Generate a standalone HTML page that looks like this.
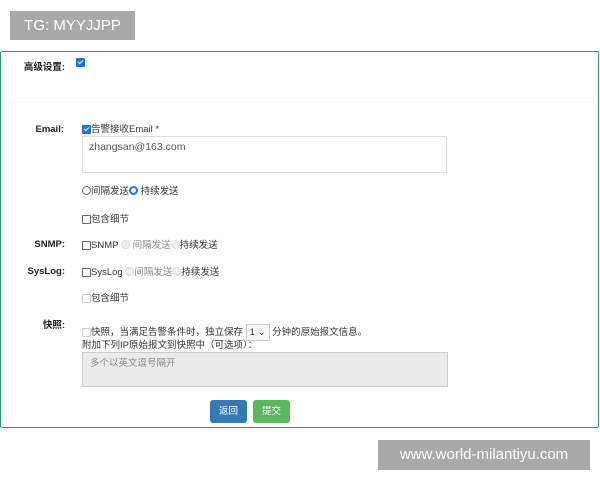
<!DOCTYPE html>
<html><head><meta charset="utf-8"><style>
body{margin:0;width:600px;height:480px;background:#fff;position:relative;overflow:hidden;font-family:"Liberation Sans","Noto Sans CJK SC",sans-serif;font-size:9.5px;color:#333}
.a{position:absolute;white-space:nowrap;line-height:11px}
.lb{font-weight:bold;color:#222;text-align:right;width:60px}
.cb{display:inline-block;width:9px;height:9px;border:1px solid #666;border-radius:1px;vertical-align:-2px;box-sizing:border-box;background:#fff}
.cb.on{background:#1a73e8;border-color:#1a73e8;position:relative}
.cb.on:after{content:"";position:absolute;left:2px;top:0px;width:2px;height:4px;border:solid #fff;border-width:0 1.3px 1.3px 0;transform:rotate(45deg)}
.cb.dis{border-color:#ccc}
.rd{display:inline-block;width:9px;height:9px;border:1px solid #666;border-radius:50%;box-sizing:border-box;vertical-align:-1px}
.rd.on{border:2.5px solid #1a73e8}
.rd.dis{border-color:#ddd;background:#eee}
.g{color:#888}
</style></head><body>
<div class="a" style="left:10px;top:11px;width:125px;height:29px;background:#a9a9a9;color:#fff;font-size:15px;line-height:29px;text-align:center">TG: MYYJJPP</div>
<div style="position:absolute;left:0;top:51px;width:597px;height:375px;border:1.5px solid #2a9d6a;border-radius:2px"></div>
<div style="position:absolute;left:10px;top:102px;width:586px;height:1px;background:#f2f2f2"></div>
<div class="a lb" style="left:5px;top:62px">高级设置:</div>
<div class="a" style="left:76px;top:57px"><span class="cb on"></span></div>
<div class="a lb" style="left:4px;top:124px">Email:</div>
<div class="a" style="left:82px;top:124px"><span class="cb on"></span>告警接收Email *</div>
<div style="position:absolute;left:82px;top:136px;width:365px;height:37px;border:1px solid #ddd;box-sizing:border-box"></div>
<div class="a" style="left:89px;top:142px;font-size:10.5px;color:#555">zhangsan@163.com</div>
<div class="a" style="left:82px;top:186px"><span class="rd"></span>间隔发送<span class="rd on"></span> 持续发送</div>
<div class="a" style="left:82px;top:214px"><span class="cb"></span>包含细节</div>
<div class="a lb" style="left:5px;top:239px">SNMP:</div>
<div class="a" style="left:82px;top:240px"><span class="cb"></span>SNMP <span class="rd dis"></span> <span class="g">间隔发送</span><span class="rd dis"></span>持续发送</div>
<div class="a lb" style="left:5px;top:266px">SysLog:</div>
<div class="a" style="left:82px;top:267px"><span class="cb"></span>SysLog <span class="rd dis"></span><span class="g">间隔发送</span><span class="rd dis"></span>持续发送</div>
<div class="a" style="left:82px;top:293px"><span class="cb dis"></span>包含细节</div>
<div class="a lb" style="left:5px;top:320px">快照:</div>
<div class="a" style="left:82px;top:324px"><span class="cb dis"></span>快照，当满足告警条件时，独立保存 <span style="display:inline-block;border:1px solid #ccc;padding:2px 3px;background:#f7f7f7">1 ⌄</span> 分钟的原始报文信息。</div>
<div class="a" style="left:82px;top:340px">附加下列IP原始报文到快照中（可选项）：</div>
<div style="position:absolute;left:82px;top:352px;width:366px;height:35px;border:1px solid #ccc;background:#ebebeb;box-sizing:border-box"></div>
<div class="a g" style="left:90px;top:358px">多个以英文逗号隔开</div>
<div class="a" style="left:210px;top:400px;width:37px;height:23px;background:#337ab7;border-radius:3px;color:#fff;text-align:center;line-height:23px">返回</div>
<div class="a" style="left:253px;top:400px;width:37px;height:23px;background:#5cb85c;border-radius:3px;color:#fff;text-align:center;line-height:23px">提交</div>
<div class="a" style="left:378px;top:440px;width:212px;height:30px;background:#a9a9a9;color:#fff;font-size:15px;line-height:30px;text-align:center">www.world-milantiyu.com</div>
</body></html>
